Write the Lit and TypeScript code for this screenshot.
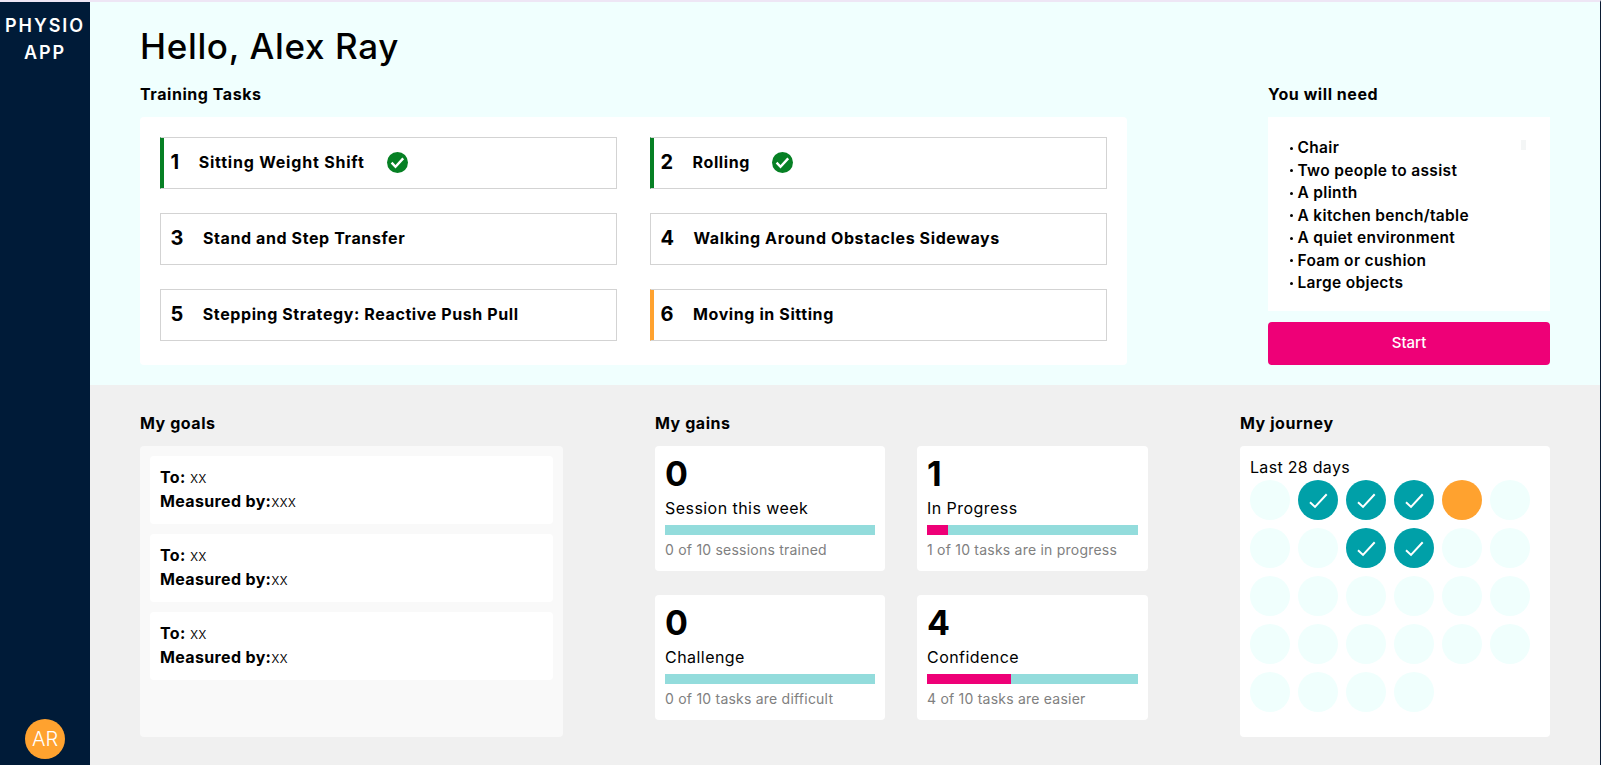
import { LitElement, html, css, svg } from "lit";
import { customElement } from "lit/decorators.js";

const tasks = [
  { n: "1", t: "Sitting Weight Shift", s: "done" },
  { n: "2", t: "Rolling", s: "done" },
  { n: "3", t: "Stand and Step Transfer", s: "" },
  { n: "4", t: "Walking Around Obstacles Sideways", s: "" },
  { n: "5", t: "Stepping Strategy: Reactive Push Pull", s: "" },
  { n: "6", t: "Moving in Sitting", s: "active" },
];
const needs = ["Chair", "Two people to assist", "A plinth", "A kitchen bench/table", "A quiet environment", "Foam or cushion", "Large objects"];
const goals = ["xxx", "xx", "xx"];
const gains = [
  { v: "0", l: "Session this week", p: 0, d: "0 of 10 sessions trained" },
  { v: "1", l: "In Progress", p: 10, d: "1 of 10 tasks are in progress" },
  { v: "0", l: "Challenge", p: 0, d: "0 of 10 tasks are difficult" },
  { v: "4", l: "Confidence", p: 40, d: "4 of 10 tasks are easier" },
];
const days = Array.from({ length: 28 }, (_, i) =>
  [1, 2, 3, 8, 9].includes(i) ? "done" : i === 4 ? "today" : "");

const greenCheck = svg`<circle cx="10.5" cy="10.5" r="10.5" fill="#068024"/><path d="M4.6 10.6l3.9 4.2L16.2 6.4" fill="none" stroke="#fff" stroke-width="2.4"/>`;
const dayCheck = svg`<path d="M12 22.3l5 4.6L28.7 14.3" fill="none" stroke="#fff" stroke-width="2"/>`;

@customElement("app-root")
export class AppRoot extends LitElement {
  static styles = css`
    :host { display: block; font-family: "Inter", "Liberation Sans", sans-serif; color: #000; }
    * { box-sizing: border-box; }
    .page { display: flex; height: 765px; width: 1601px; border-top: 2px solid #eee6f5; border-right: 1px solid #0b1b33; overflow: hidden; background: #f0f0f0; }
    .side { width: 90px; flex: none; background: #001b38; color: #fff; display: flex; flex-direction: column; align-items: center; justify-content: space-between; padding: 10px 0 6px; }
    .logo { font-size: 18px; font-weight: 600; line-height: 27px; letter-spacing: 1.9px; text-align: center; white-space: nowrap; }
    .avatar { width: 40px; height: 40px; border-radius: 50%; background: #ffa22f; color: #fff; font-size: 20px; font-weight: 300; display: flex; align-items: center; justify-content: center; }
    .main { flex: 1; display: flex; flex-direction: column; }
    .top { background: #f0fffe; height: 383px; padding: 0 50px; display: flex; flex-direction: column; }
    h1 { margin: 0; font-size: 35px; font-weight: 500; line-height: 42px; padding-top: 23px; height: 67px; letter-spacing: 0.65px; }
    .cols { display: flex; justify-content: space-between; margin-top: 16px; }
    h2 { margin: 0 0 14px; font-size: 16px; font-weight: 700; line-height: 18px; letter-spacing: 0.55px; }
    .tasks { width: 987px; height: 248px; background: #fff; border-radius: 4px; padding: 20px; display: grid; grid-template-columns: 457px 457px; column-gap: 33px; row-gap: 24px; grid-auto-rows: 52px; }
    .task { border: 1px solid #d3d3d3; display: flex; align-items: center; padding: 0 0 2px 9.5px; }
    .task.done { border-left-color: #068024; box-shadow: inset 3px 0 0 #068024; }
    .task.active { border-left-color: #ffa22f; box-shadow: inset 3px 0 0 #ffa22f; }
    .num { font-size: 20px; font-weight: 700; margin-right: 19.5px; }
    .title { font-size: 16px; font-weight: 700; letter-spacing: 0.6px; }
    .task:first-child .title { letter-spacing: 0.8px; }
    .task svg { width: 21px; height: 21px; margin-left: 22px; }
    .need { width: 282px; }
    .list { margin: 0; height: 194px; background: #fff; padding: 20px 21.5px 0; list-style: none; position: relative; }
    .list li { font-size: 15.5px; font-weight: 600; line-height: 22.5px; letter-spacing: 0.33px; display: flex; align-items: center; gap: 5px; }
    .bullet { width: 3px; height: 3px; border-radius: 50%; background: #000; flex: none; }
    .list::after { content: ""; position: absolute; top: 23px; right: 24px; width: 5px; height: 10px; background: #f4f6f6; }
    .start { display: block; width: 100%; height: 43px; margin-top: 11px; border: 0; border-radius: 4px; background: #ee0077; color: #fff; font: 500 15px "Inter", sans-serif; padding: 0 0 2px; }
    .bottom { flex: 1; padding: 29px 50px 0; display: flex; justify-content: space-between; }
    .goals { width: 423px; height: 291px; background: #f9f9f9; border-radius: 4px; padding: 10px; display: flex; flex-direction: column; gap: 10px; }
    .goal { height: 68px; background: #fff; border-radius: 4px; padding: 10px 10px 0; font-size: 15.5px; line-height: 23.5px; font-weight: 300; }
    .goal b { font-weight: 700; font-size: 16px; letter-spacing: 0.35px; }
    .col-gains { width: 493px; }
    .gains { display: grid; grid-template-columns: 230px 231px; column-gap: 32px; row-gap: 24px; grid-auto-rows: 125px; }
    .gain { background: #fff; border-radius: 4px; padding: 0 10px; }
    .val { font-size: 34px; font-weight: 700; line-height: 34px; margin-top: 11px; letter-spacing: 1px; }
    .lbl { font-size: 16px; font-weight: 400; line-height: 20px; margin-top: 7px; letter-spacing: 0.45px; }
    .bar { height: 10px; background: #93dcdc; margin-top: 7px; }
    .fill { height: 100%; background: #ee0077; }
    .desc { font-size: 14px; color: #808080; line-height: 20px; margin-top: 5px; letter-spacing: 0.22px; }
    .journey { width: 310px; height: 291px; background: #fff; border-radius: 4px; padding: 10px; }
    .cap { font-size: 16px; line-height: 22px; height: 24px; letter-spacing: 0.3px; }
    .days { display: grid; grid-template-columns: repeat(6, 40px); gap: 8px; }
    .day { width: 40px; height: 40px; border-radius: 50%; background: #f0fffd; }
    .day.done { background: #00a0a8; }
    .day.today { background: #ffa22f; }
    .day svg { width: 40px; height: 40px; display: block; }
  `;

  render() {
    return html`<div class="page">
      <nav class="side">
        <div class="logo">PHYSIO<br />APP</div>
        <div class="avatar">AR</div>
      </nav>
      <main class="main">
        <section class="top">
          <h1>Hello, Alex Ray</h1>
          <div class="cols">
            <div>
              <h2>Training Tasks</h2>
              <div class="tasks">
                ${tasks.map((t) => html`<div class="task ${t.s}">
                  <span class="num">${t.n}</span><span class="title">${t.t}</span>
                  ${t.s === "done" ? html`<svg viewBox="0 0 21 21">${greenCheck}</svg>` : ""}
                </div>`)}
              </div>
            </div>
            <div class="need">
              <h2>You will need</h2>
              <ul class="list">
                ${needs.map((n) => html`<li><span class="bullet"></span>${n}</li>`)}
              </ul>
              <button class="start">Start</button>
            </div>
          </div>
        </section>
        <section class="bottom">
          <div>
            <h2>My goals</h2>
            <div class="goals">
              ${goals.map((g) => html`<div class="goal"><div><b>To:</b> xx</div><div><b>Measured by:</b>${g}</div></div>`)}
            </div>
          </div>
          <div class="col-gains">
            <h2>My gains</h2>
            <div class="gains">
              ${gains.map((g) => html`<div class="gain">
                <div class="val">${g.v}</div>
                <div class="lbl">${g.l}</div>
                <div class="bar"><div class="fill" style="width:${g.p}%"></div></div>
                <div class="desc">${g.d}</div>
              </div>`)}
            </div>
          </div>
          <div>
            <h2>My journey</h2>
            <div class="journey">
              <div class="cap">Last 28 days</div>
              <div class="days">
                ${days.map((d) => html`<div class="day ${d}">${d === "done" ? html`<svg viewBox="0 0 40 40">${dayCheck}</svg>` : ""}</div>`)}
              </div>
            </div>
          </div>
        </section>
      </main>
    </div>`;
  }
}
